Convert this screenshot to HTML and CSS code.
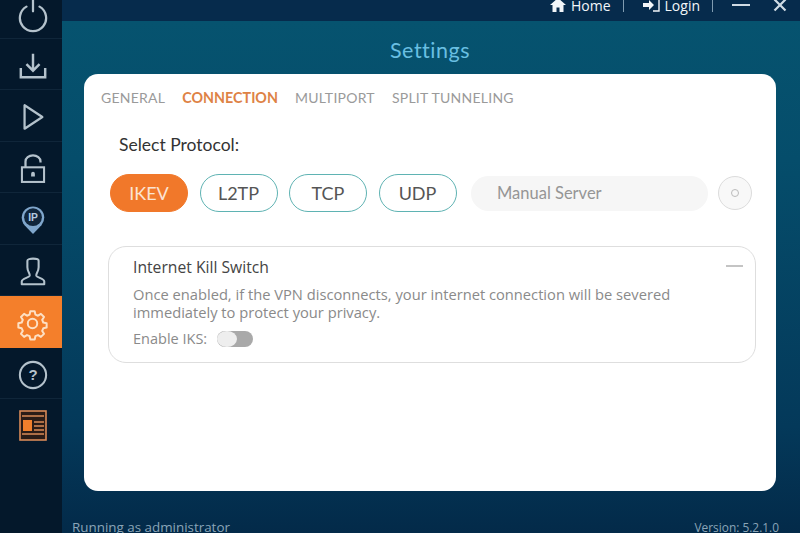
FILE: index.html
```html
<!DOCTYPE html>
<html lang="en">
<head>
  <meta charset="UTF-8">
  <title>Settings</title>
  <link rel="stylesheet" href="styles.css">
</head>
<body>
  <div class="app">
    <nav class="sidebar">
      <div class="side-item first">
        <svg class="icon" width="30" height="30" viewBox="0 0 32 32"><path d="M9 6a14 14 0 1 0 14 0M16 -6v17" fill="none" stroke="#b4c2cc" stroke-width="2.400" stroke-linecap="round"/></svg>
      </div>
      <div class="side-item">
        <svg class="icon" width="30" height="30" viewBox="0 0 32 32"><path d="M16 3v18M9 14l7 7 7-7M3 18v10h26V18" fill="none" stroke="#b4c2cc" stroke-width="2.600"/></svg>
      </div>
      <div class="side-item">
        <svg class="icon" width="30" height="30" viewBox="0 0 32 32"><path d="M7 3.500v25L26 16z" fill="none" stroke="#b4c2cc" stroke-width="2.400" stroke-linejoin="round"/></svg>
      </div>
      <div class="side-item">
        <svg class="icon" width="30" height="30" viewBox="0 0 32 32"><path d="M8 14V8a8 6.500 0 0 1 16 0v1" fill="none" stroke="#b4c2cc" stroke-width="2.400"/><rect x="4.200" y="14.200" width="23.600" height="15.600" fill="none" stroke="#b4c2cc" stroke-width="2.200"/><path d="M14 21a2 2 0 1 1 4 0v3h-4z" fill="#b4c2cc"/></svg>
      </div>
      <div class="side-item">
        <svg class="icon" width="30" height="32" viewBox="0 0 32 32"><path d="M16 31 7 21.500a12 12 0 1 1 18 0z" fill="#7fa6cc"/><circle cx="16" cy="13" r="9.500" fill="#10253b"/><text x="16" y="17.500" class="ip-text">IP</text></svg>
      </div>
      <div class="side-item">
        <svg class="icon" width="30" height="30" viewBox="0 0 32 32"><path d="M10 4c0-3 12-3 12 0v7c0 5-3 6-2.500 9 .5 2 8.500 3 8.500 6v3H4v-3c0-3 8-4 8.500-6 .5-3-2.500-4-2.500-9z" fill="none" stroke="#b4c2cc" stroke-width="2.200" stroke-linejoin="round"/></svg>
      </div>
      <div class="side-item active">
        <svg class="icon" width="29" height="29" viewBox="0 0 32 32"><circle cx="16" cy="16" r="5.200" fill="none" stroke="#fde0c4" stroke-width="2.200"/><path d="M13.600 2.500h4.800l.8 3.700 2.900 1.200 3.200-2 3.400 3.400-2 3.200 1.200 2.900 3.700.8v4.800l-3.700.8-1.200 2.900 2 3.200-3.400 3.400-3.200-2-2.900 1.200-.8 3.700h-4.800l-.8-3.700-2.900-1.200-3.200 2-3.400-3.400 2-3.200-1.200-2.900-3.700-.8v-4.800l3.700-.8 1.200-2.900-2-3.200 3.400-3.400 3.200 2 2.900-1.200z" fill="none" stroke="#fde0c4" stroke-width="2.200" stroke-linejoin="round"/></svg>
      </div>
      <div class="side-item">
        <svg class="icon" width="30" height="30" viewBox="0 0 32 32"><circle cx="16" cy="16" r="14" fill="none" stroke="#b4c2cc" stroke-width="2.200"/><text x="16" y="21.500" class="help-text">?</text></svg>
      </div>
      <div class="side-item plain">
        <svg class="icon" width="28" height="32" viewBox="0 0 28 32"><rect x="1" y="2" width="26" height="29" fill="#2a1c17" stroke="#d98a58" stroke-width="1.600"/><path d="M3 7h22M15 13h10M15 17h10M15 21h10M3 25h22" stroke="#d98a58" stroke-width="1.600"/><rect x="4" y="11" width="9" height="11" fill="#f07f2c"/></svg>
      </div>
    </nav>

    <div class="main">
      <header class="topbar">
        <span class="top-link">
          <svg width="16" height="14" viewBox="0 0 16 14"><path d="M8 0 0 7h2.500v7H6.500V9.500h3V14h4V7H16z" fill="#f2f6f9"/></svg>
          Home
        </span>
        <span class="top-sep"></span>
        <span class="top-link">
          <svg width="17" height="14" viewBox="0 0 17 14"><path d="M0 5h6V2l5 5-5 5V9H0z" fill="#f2f6f9"/><path d="M10 1h6v12h-6" fill="none" stroke="#f2f6f9" stroke-width="1.400"/></svg>
          Login
        </span>
        <span class="top-sep"></span>
        <span class="win-min"></span>
        <svg class="win-close" width="14" height="14" viewBox="0 0 14 14"><path d="M1.500 1.500l11 11M12.500 1.500l-11 11" stroke="#cfdbe4" stroke-width="2.200"/></svg>
      </header>

      <h1 class="page-title">Settings</h1>

      <section class="card">
        <div class="tabs">
          <span class="tab">GENERAL</span>
          <span class="tab current">CONNECTION</span>
          <span class="tab">MULTIPORT</span>
          <span class="tab">SPLIT TUNNELING</span>
        </div>

        <div class="protocol-label">Select Protocol:</div>

        <div class="protocol-row">
          <span class="pill selected">IKEV</span>
          <span class="pill">L2TP</span>
          <span class="pill">TCP</span>
          <span class="pill">UDP</span>
          <span class="server-input">Manual Server</span>
          <span class="server-btn"><span class="server-dot"></span></span>
        </div>

        <div class="kill-box">
          <span class="collapse"></span>
          <div class="kill-title">Internet Kill Switch</div>
          <p class="kill-text">Once enabled, if the VPN disconnects, your internet connection will be severed<br>immediately to protect your privacy.</p>
          <div class="kill-enable">
            Enable IKS:
            <span class="toggle"><span class="knob"></span></span>
          </div>
        </div>
      </section>

      <footer class="status">
        <span>Running as administrator</span>
        <span class="version">Version: 5.2.1.0</span>
      </footer>
    </div>
  </div>
</body>
</html>
```

FILE: styles.css
```css
html, body {
  margin: 0;
  height: 533px;
  overflow: hidden;
}
.app {
  display: flex;
  width: 800px;
  height: 533px;
  overflow: hidden;
  background: #04182b;
}
.sidebar {
  width: 62px;
  flex: none;
  display: flex;
  flex-direction: column;
  background: #04182b;
}
.side-item {
  height: 51.5px;
  flex: none;
  box-sizing: border-box;
  padding: 4px 0 0 3px;
  display: flex;
  align-items: center;
  justify-content: center;
  border-bottom: 1px solid #10263a;
}
.side-item.first {
  height: 38.5px;
  padding-top: 0;
  align-items: flex-end;
  padding-bottom: 7px;
}
.side-item.active {
  background: #f47f2b;
  border-bottom: none;
}
.side-item.plain {
  padding-top: 0;
  border-bottom: none;
}
.icon {
  overflow: visible;
}
.ip-text {
  font: bold 11px "Liberation Sans", sans-serif;
  fill: #b4cbe0;
  text-anchor: middle;
}
.help-text {
  font: bold 16px "Liberation Sans", sans-serif;
  fill: #b4c2cc;
  text-anchor: middle;
}
.main {
  flex: 1;
  display: flex;
  flex-direction: column;
  height: 533px;
  background: linear-gradient(#06536f 4%, #054d6b 30%, #04395a 80%, #032a49 100%);
  font-family: "Lato", sans-serif;
}
.topbar {
  height: 21px;
  flex: none;
  box-sizing: border-box;
  display: flex;
  align-items: center;
  justify-content: flex-end;
  padding: 0 13px 11px 0;
  background: #062b4c;
  color: #f2f6f9;
  font: 14px "Open Sans", sans-serif;
}
.top-link {
  display: flex;
  align-items: center;
  gap: 5px;
}
.top-sep {
  width: 1px;
  height: 14px;
  background: #7f9bb0;
  margin: 0 19px 0 12px;
}
.win-min {
  width: 18px;
  height: 2px;
  background: #cfdbe4;
  margin-right: 23px;
}
.page-title {
  margin: 0;
  height: 53px;
  line-height: 58px;
  padding-right: 2px;
  text-align: center;
  font-size: 21.500px;
  font-weight: 400;
  letter-spacing: 0.5px;
  color: #69bfe2;
}
.card {
  margin-left: 22px;
  width: 692px;
  height: 417px;
  flex: none;
  box-sizing: border-box;
  padding: 13px 21px 0 17px;
  background: #fff;
  border-radius: 14px;
}
.tabs {
  display: flex;
  gap: 17px;
  height: 20px;
  align-items: center;
  font-size: 14px;
  letter-spacing: 0.25px;
  color: #9a9a9a;
}
.tab.current {
  color: #de8245;
  font-size: 14.300px;
  font-weight: 700;
  letter-spacing: 0;
}
.protocol-label {
  margin: 28px 0 0 18px;
  font-size: 17.500px;
  line-height: 20px;
  color: #333;
}
.protocol-row {
  display: flex;
  align-items: center;
  margin: 19px 0 0 9px;
}
.pill {
  width: 78px;
  height: 38px;
  margin-right: 11.5px;
  box-sizing: border-box;
  border: 1.500px solid #5fb3b3;
  border-radius: 19px;
  display: flex;
  align-items: center;
  justify-content: center;
  padding-bottom: 1px;
  font-size: 18px;
  color: #555;
}
.pill.selected {
  background: #f1782a;
  border-color: #f1782a;
  color: #fbe3d2;
}
.server-input {
  width: 237px;
  height: 35px;
  margin-left: 3px;
  box-sizing: border-box;
  padding-left: 26px;
  background: #f6f6f6;
  border-radius: 18px;
  display: flex;
  align-items: center;
  font-size: 16.500px;
  color: #959595;
}
.server-btn {
  width: 34px;
  height: 34px;
  margin-left: 10px;
  box-sizing: border-box;
  border: 1px solid #dcdcdc;
  border-radius: 50%;
  background: #f8f8f8;
  display: flex;
  align-items: center;
  justify-content: center;
}
.server-dot {
  width: 8px;
  height: 8px;
  box-sizing: border-box;
  border: 1.500px solid #bbb;
  border-radius: 50%;
}
.kill-box {
  position: relative;
  margin: 34px 0 0 7px;
  width: 648px;
  height: 117px;
  box-sizing: border-box;
  padding: 10px 20px 0 24px;
  border: 1.500px solid #dedede;
  border-radius: 18px;
  font-family: "Open Sans", sans-serif;
}
.collapse {
  position: absolute;
  top: 18px;
  right: 12px;
  width: 17px;
  height: 2px;
  background: #c4c4c4;
}
.kill-title {
  font-size: 15.700px;
  line-height: 20px;
  color: #444;
}
.kill-text {
  margin: 8px 0 0;
  font-size: 14.700px;
  line-height: 18px;
  color: #8a8a8a;
}
.kill-enable {
  display: flex;
  align-items: center;
  gap: 10px;
  margin-top: 9px;
  font-size: 14.500px;
  line-height: 18px;
  color: #8a8a8a;
}
.toggle {
  position: relative;
  width: 36px;
  height: 16px;
  border-radius: 8px;
  background: #a9a9a9;
}
.knob {
  position: absolute;
  left: 0;
  top: 0;
  width: 20px;
  height: 16px;
  border-radius: 50%;
  background: #eee;
}
.status {
  display: flex;
  justify-content: space-between;
  align-items: center;
  margin-top: 27px;
  padding: 0 21px 0 10px;
  font: 13.400px "Open Sans", sans-serif;
  color: #8aa5b8;
}
.version {
  font-size: 11.900px;
}
```
